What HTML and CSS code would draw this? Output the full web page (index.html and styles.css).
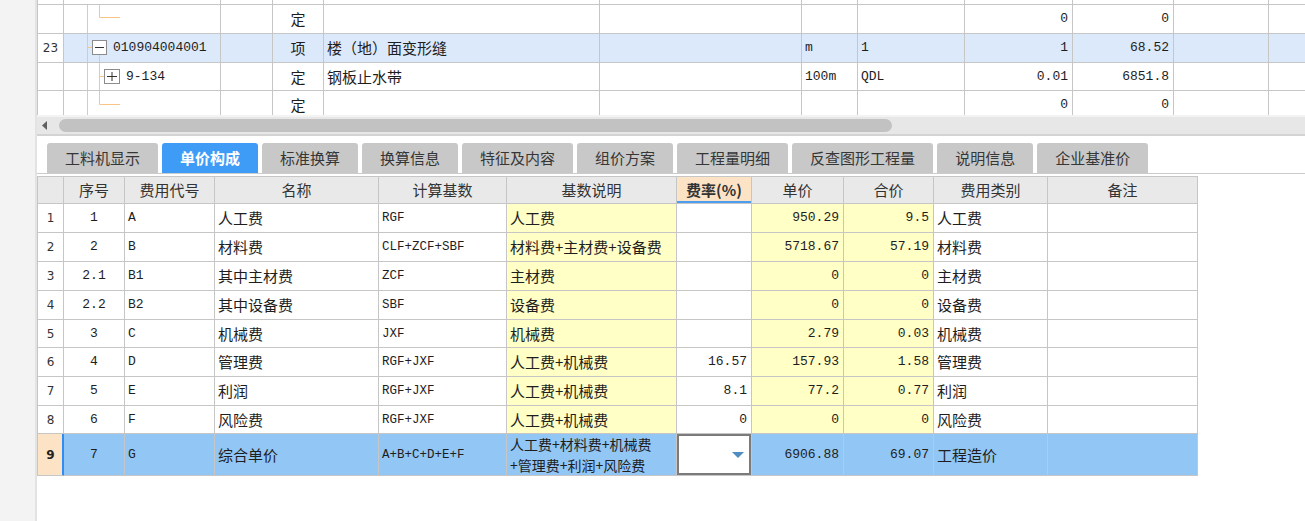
FILE: index.html
```html
<!DOCTYPE html>
<html lang="zh-CN">
<head>
<meta charset="utf-8">
<title>单价构成</title>
<link rel="stylesheet" href="styles.css">
</head>
<body>
<div class="app">
  <div class="side"></div>
  <div class="main">
    <div class="tree-wrap">
      <table class="tree">
        <colgroup>
          <col class="c1"><col class="c2"><col class="c3"><col class="c4"><col class="c5"><col class="c6"><col class="c7"><col class="c8"><col class="c9"><col class="c10"><col class="c11"><col class="c12">
        </colgroup>
        <tr class="t-cut"><td></td><td class="tc-tree"></td><td></td><td></td><td></td><td></td><td></td><td></td><td></td><td></td><td></td><td></td></tr>
        <tr class="h29">
          <td></td>
          <td class="tc-tree"><div class="node"><svg width="60" height="28" viewBox="0 0 60 28"><path d="M23.5 0V28M35.5 0V12.5H56" stroke="#f8c586" fill="none"/></svg></div></td>
          <td></td>
          <td class="cn ctr">定</td>
          <td></td><td></td><td></td><td></td>
          <td class="mono num">0</td><td class="mono num">0</td><td></td><td></td>
        </tr>
        <tr class="h29 sel">
          <td class="rn ctr">23</td>
          <td class="tc-tree"><div class="node"><svg width="46" height="28" viewBox="0 0 46 28"><path d="M23.5 0V28M23.5 13.5H28M35.5 21V28" stroke="#f8c586" fill="none"/><rect x="28.5" y="6.5" width="14" height="14" fill="#fff" stroke="#8c8c8c"/><path d="M31 13.5H40" stroke="#333"/></svg><span class="mono code1">010904004001</span></div></td>
          <td></td>
          <td class="cn ctr">项</td>
          <td class="cn">楼（地）面变形缝</td>
          <td></td>
          <td class="mono">m</td>
          <td class="mono">1</td>
          <td class="mono num">1</td>
          <td class="mono num">68.52</td>
          <td></td><td></td>
        </tr>
        <tr class="h28">
          <td></td>
          <td class="tc-tree"><div class="node"><svg width="58" height="27" viewBox="0 0 58 27"><path d="M23.5 0V27M35.5 0V27M35.5 13.5H40" stroke="#f8c586" fill="none"/><rect x="40.5" y="6.5" width="15" height="14" fill="#fff" stroke="#8c8c8c"/><path d="M43 13.5H53M48 9V18" stroke="#333"/></svg><span class="mono code2">9-134</span></div></td>
          <td></td>
          <td class="cn ctr">定</td>
          <td class="cn">钢板止水带</td>
          <td></td>
          <td class="mono">100m</td>
          <td class="mono">QDL</td>
          <td class="mono num">0.01</td>
          <td class="mono num">6851.8</td>
          <td></td><td></td>
        </tr>
        <tr class="h29">
          <td></td>
          <td class="tc-tree"><div class="node"><svg width="60" height="28" viewBox="0 0 60 28"><path d="M23.5 0V28M35.5 0V13.5H56" stroke="#f8c586" fill="none"/></svg></div></td>
          <td></td>
          <td class="cn ctr">定</td>
          <td></td><td></td><td></td><td></td>
          <td class="mono num">0</td><td class="mono num">0</td><td></td><td></td>
        </tr>
      </table>
    </div>

    <div class="hscroll">
      <svg class="harrow" width="5" height="9" viewBox="0 0 5 9"><path d="M5 0V9L0 4.5Z" fill="#606060"/></svg>
      <div class="thumb"></div>
    </div>

    <div class="tabs">
      <div class="tab">工料机显示</div>
      <div class="tab active">单价构成</div>
      <div class="tab">标准换算</div>
      <div class="tab">换算信息</div>
      <div class="tab">特征及内容</div>
      <div class="tab">组价方案</div>
      <div class="tab">工程量明细</div>
      <div class="tab">反查图形工程量</div>
      <div class="tab">说明信息</div>
      <div class="tab">企业基准价</div>
    </div>

    <table class="grid">
      <colgroup>
        <col class="g1"><col class="g2"><col class="g3"><col class="g4"><col class="g5"><col class="g6"><col class="g7"><col class="g8"><col class="g9"><col class="g10"><col class="g11">
      </colgroup>
      <tr class="head">
        <th></th><th>序号</th><th>费用代号</th><th>名称</th><th>计算基数</th><th>基数说明</th><th class="rate-h">费率(%)</th><th>单价</th><th>合价</th><th>费用类别</th><th>备注</th>
      </tr>
      <tr class="h29">
        <td class="rn ctr">1</td><td class="mono ctr">1</td><td class="mono">A</td><td class="cn">人工费</td><td class="mono sm">RGF</td><td class="cn yel">人工费</td><td class="mono num"></td><td class="mono num yel">950.29</td><td class="mono num yel">9.5</td><td class="cn">人工费</td><td></td>
      </tr>
      <tr class="h29">
        <td class="rn ctr">2</td><td class="mono ctr">2</td><td class="mono">B</td><td class="cn">材料费</td><td class="mono sm">CLF+ZCF+SBF</td><td class="cn yel">材料费+主材费+设备费</td><td class="mono num"></td><td class="mono num yel">5718.67</td><td class="mono num yel">57.19</td><td class="cn">材料费</td><td></td>
      </tr>
      <tr class="h29">
        <td class="rn ctr">3</td><td class="mono ctr">2.1</td><td class="mono">B1</td><td class="cn">其中主材费</td><td class="mono sm">ZCF</td><td class="cn yel">主材费</td><td class="mono num"></td><td class="mono num yel">0</td><td class="mono num yel">0</td><td class="cn">主材费</td><td></td>
      </tr>
      <tr class="h29">
        <td class="rn ctr">4</td><td class="mono ctr">2.2</td><td class="mono">B2</td><td class="cn">其中设备费</td><td class="mono sm">SBF</td><td class="cn yel">设备费</td><td class="mono num"></td><td class="mono num yel">0</td><td class="mono num yel">0</td><td class="cn">设备费</td><td></td>
      </tr>
      <tr class="h28">
        <td class="rn ctr">5</td><td class="mono ctr">3</td><td class="mono">C</td><td class="cn">机械费</td><td class="mono sm">JXF</td><td class="cn yel">机械费</td><td class="mono num"></td><td class="mono num yel">2.79</td><td class="mono num yel">0.03</td><td class="cn">机械费</td><td></td>
      </tr>
      <tr class="h29">
        <td class="rn ctr">6</td><td class="mono ctr">4</td><td class="mono">D</td><td class="cn">管理费</td><td class="mono sm">RGF+JXF</td><td class="cn yel">人工费+机械费</td><td class="mono num">16.57</td><td class="mono num yel">157.93</td><td class="mono num yel">1.58</td><td class="cn">管理费</td><td></td>
      </tr>
      <tr class="h29">
        <td class="rn ctr">7</td><td class="mono ctr">5</td><td class="mono">E</td><td class="cn">利润</td><td class="mono sm">RGF+JXF</td><td class="cn yel">人工费+机械费</td><td class="mono num">8.1</td><td class="mono num yel">77.2</td><td class="mono num yel">0.77</td><td class="cn">利润</td><td></td>
      </tr>
      <tr class="h28">
        <td class="rn ctr">8</td><td class="mono ctr">6</td><td class="mono">F</td><td class="cn">风险费</td><td class="mono sm">RGF+JXF</td><td class="cn yel">人工费+机械费</td><td class="mono num">0</td><td class="mono num yel">0</td><td class="mono num yel">0</td><td class="cn">风险费</td><td></td>
      </tr>
      <tr class="h42 cur">
        <td class="rn ctr rowhead">9</td><td class="mono ctr">7</td><td class="mono">G</td><td class="cn">综合单价</td><td class="mono sm">A+B+C+D+E+F</td><td class="cn two">人工费+材料费+机械费<br>+管理费+利润+风险费</td><td class="edit"><div class="dd"><svg width="12" height="6" viewBox="0 0 12 6"><path d="M0 0H12L6 6Z" fill="#4f8cc0"/></svg></div></td><td class="mono num">6906.88</td><td class="mono num">69.07</td><td class="cn">工程造价</td><td></td>
      </tr>
    </table>
  </div>
</div>
</body>
</html>
```

FILE: styles.css
```css
* { box-sizing: border-box; }
html, body { margin: 0; padding: 0; }
body {
  width: 1305px;
  height: 521px;
  overflow: hidden;
  background: #ffffff;
  font-family: "Noto Sans CJK SC", "Noto Sans", sans-serif;
  color: #1e1e1e;
}
.app { display: flex; height: 521px; }
.side {
  width: 37px;
  flex: none;
  background: #f3f3f3;
  border-right: 2px solid #e3e3e3;
}
.main { flex: 1; min-width: 0; overflow: hidden; }

table { border-collapse: separate; border-spacing: 0; table-layout: fixed; }
td, th { padding: 0 3px; white-space: nowrap; overflow: hidden; vertical-align: middle; line-height: 18px; }

/* top tree grid */
.tree-wrap { height: 115px; overflow: hidden; }
.tree { width: 1362px; border-left: 1px solid #c6c6c6; }
.tree td { border-right: 1px solid #c6c6c6; border-bottom: 1px solid #c6c6c6; }
.tree col.c1 { width: 26px; }
.tree col.c2 { width: 157px; }
.tree col.c3 { width: 52px; }
.tree col.c4 { width: 51px; }
.tree col.c5 { width: 276px; }
.tree col.c6 { width: 202px; }
.tree col.c7 { width: 56px; }
.tree col.c8 { width: 107px; }
.tree col.c9 { width: 108px; }
.tree col.c10 { width: 101px; }
.tree col.c11 { width: 95px; }
.tree col.c12 { width: 130px; }
.t-cut { height: 5px; }
.t-cut td { padding: 0; line-height: 0; }
.tree td.tc-tree { padding: 0; }
.node { display: flex; align-items: center; }
.node svg { display: block; flex: none; }
.code1 { margin-left: 3px; font-size: 12.5px; }
.code2 { margin-left: 4px; font-size: 12.5px; }
.tree .sel td { background: #dce9fb; }
.tree .sel td:first-child { background: #ffffff; }

.h29 { height: 29px; }
.h28 { height: 28px; }
.h42 { height: 42px; }

.cn { font-size: 15px; font-family: "Noto Sans CJK SC", sans-serif; }
.mono { font-family: "Liberation Mono", "DejaVu Sans Mono", monospace; font-size: 13px; }
.mono.sm { font-size: 12.5px; }
.rn { font-family: "DejaVu Sans", sans-serif; font-size: 12px; color: #333; }
.ctr { text-align: center; }
.num { text-align: right; padding-right: 4px; }

/* scrollbar */
.hscroll {
  height: 21px;
  background: #e7e7e7;
  border-top: 2px solid #f3f3f3;
  border-bottom: 2px solid #d3d3d3;
  display: flex;
  align-items: center;
  padding-left: 5px;
}
.harrow { display: block; flex: none; }
.thumb {
  margin-left: 12px;
  width: 833px;
  height: 13px;
  border-radius: 7px;
  background: #c2c2c2;
}

/* tabs */
.tabs {
  display: flex;
  gap: 4px;
  padding: 7px 0 0 10px;
  border-bottom: 1px solid #cbcbcb;
}
.tab {
  height: 30px;
  padding: 0 18px;
  background: #c8c8c8;
  border-radius: 3px 3px 0 0;
  font-size: 15px;
  line-height: 30px;
  color: #363636;
  white-space: nowrap;
}
.tab.active { background: #3f9cf6; color: #ffffff; font-weight: 700; }

/* bottom grid */
.grid {
  margin-top: 2px;
  width: 1161px;
  border-left: 1px solid #c6c6c6;
  border-top: 1px solid #c6c6c6;
}
.grid td, .grid th { border-right: 1px solid #c6c6c6; border-bottom: 1px solid #c6c6c6; }
.grid col.g1 { width: 26px; }
.grid col.g2 { width: 61px; }
.grid col.g3 { width: 90px; }
.grid col.g4 { width: 164px; }
.grid col.g5 { width: 128px; }
.grid col.g6 { width: 170px; }
.grid col.g7 { width: 75px; }
.grid col.g8 { width: 92px; }
.grid col.g9 { width: 90px; }
.grid col.g10 { width: 114px; }
.grid col.g11 { width: 150px; }
.grid .head { height: 27px; }
.grid th {
  background: #e9e9e9;
  font-weight: 400;
  font-size: 15px;
  color: #333;
  text-align: center;
}
.grid th.rate-h {
  background: #fde3c6;
  font-weight: 700;
  box-shadow: inset 0 -2px 0 #4c9cf0;
}
.yel { background: #ffffc6; }

.grid .cur td { background: #92c6f4; }
.grid .cur td.rowhead {
  background: #fde3c6;
  font-weight: 700;
  color: #222;
  border-right-color: #2f8cf0;
  box-shadow: inset -1px 0 0 #2f8cf0;
}
.grid td.two { font-size: 14px; line-height: 20.3px; white-space: normal; }
.grid .cur td.edit {
  background: #ffffff;
  box-shadow: inset 0 0 0 2px #7b7b7b;
  padding: 0 7px 0 0;
}
.dd { display: flex; justify-content: flex-end; align-items: center; }
.dd svg { display: block; }
```
